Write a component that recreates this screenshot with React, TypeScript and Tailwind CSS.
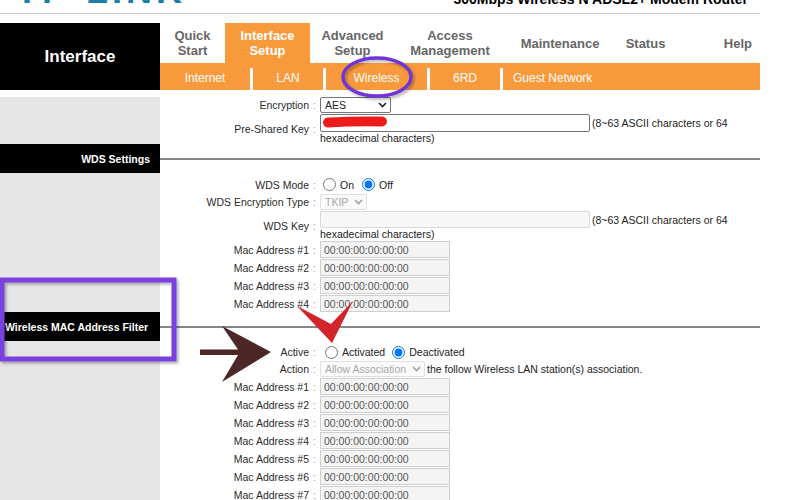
import React from 'react';

type Tab = { lines: string[]; w: string; active?: boolean; right?: boolean };

const tabs: Tab[] = [
    { lines: ['Quick', 'Start'], w: 'w-[65px]' },
    { lines: ['Interface', 'Setup'], w: 'w-[85px]', active: true },
    { lines: ['Advanced', 'Setup'], w: 'w-[85px]' },
    { lines: ['Access', 'Management'], w: 'w-[110px]' },
    { lines: ['Maintenance'], w: 'w-[110px]' },
    { lines: ['Status'], w: 'w-[61px]' },
    { lines: ['Help'], w: 'w-[84px]', right: true },
];

const subTabs = [
    { label: 'Internet', w: 'w-[90px]' },
    { label: 'LAN', w: 'w-[70px]' },
    { label: 'Wireless', w: 'w-[101px]' },
    { label: '6RD', w: 'w-[70px]' },
];

const Chevron = ({ className }: { className: string }) => (
    <svg width="9" height="6" viewBox="0 0 9 6" className={className}>
        <path d="M1 1l3.5 3.5L8 1" fill="none" stroke="currentColor" strokeWidth="1.6" />
    </svg>
);

const FakeSelect = ({ value, className, disabled }: { value: string; className: string; disabled?: boolean }) => (
    <div
        className={`flex items-center justify-between rounded-[2px] border pl-[4px] pr-[3px] ${
            disabled ? 'border-[#e0e0e0] bg-[#fafafa] text-[#a8a8a8]' : 'border-[#767676] bg-white text-[#222]'
        } ${className}`}
    >
        <span>{value}</span>
        <Chevron className={disabled ? 'text-[#a0a0a0]' : 'text-[#222]'} />
    </div>
);

const Field = ({ label, className = '', children }: { label: string; className?: string; children: React.ReactNode }) => (
    <div className={`flex items-center ${className}`}>
        <div className="w-[149px] text-right text-[#2a2a2a]">{label}</div>
        <div className="w-[11px] text-center text-[#9a9a9a]">:</div>
        {children}
    </div>
);

const MacRow = ({ n }: { n: number }) => (
    <Field label={`Mac Address #${n}`} className="h-[17px]">
        <input
            readOnly
            value="00:00:00:00:00:00"
            className="h-[17px] w-[130px] border border-[#cfcfcf] bg-[#f4f4f4] px-[3px] text-[#555] outline-none"
        />
    </Field>
);

const Radio = ({ name, label, checked }: { name: string; label: string; checked?: boolean }) => (
    <label className="flex items-center">
        <input type="radio" name={name} defaultChecked={checked} className="m-0 h-[13px] w-[13px]" />
        <span className="ml-[4px] text-[#222]">{label}</span>
    </label>
);

const SectionBar = ({ title, left }: { title: string; left?: boolean }) => (
    <div className="flex h-[29px] items-center">
        <div
            className={`flex h-full w-[160px] items-center bg-black text-[10.5px] font-bold text-white ${
                left ? 'justify-start pl-[5px]' : 'justify-end pr-[10px]'
            }`}
        >
            {title}
        </div>
        <div className="h-[2px] w-[600px] bg-[#858585]" />
    </div>
);

const KeyField = ({ label, disabled, tall }: { label: string; disabled?: boolean; tall?: boolean }) => (
    <Field label={label}>
        <div className="flex flex-col">
            <div className={`flex items-center ${tall ? 'h-[18px]' : 'h-[17px]'}`}>
                <input
                    readOnly
                    disabled={disabled}
                    className={`h-full w-[270px] rounded-[2px] border outline-none ${
                        disabled ? 'border-[#d9d9d9] bg-[#f7f7f7]' : 'border-[#767676] bg-white'
                    }`}
                />
                <span className="ml-[2px] text-[#222]">(8~63 ASCII characters or 64</span>
            </div>
            <div className="h-[12px] text-[#222]">hexadecimal characters)</div>
        </div>
    </Field>
);

export default function App() {
    return (
        <div className="relative h-[500px] w-[801px] overflow-hidden bg-white font-['Liberation_Sans',Arial,sans-serif]">
            {/* header, cut off at the top */}
            <div className="flex h-[13px] overflow-hidden">
                <div className="ml-[16px] -mt-[27px] text-[36px] font-bold leading-[36px] tracking-[4px] text-[#1d7fa6]">
                    TP-LINK
                </div>
                <div className="ml-auto mr-[53px] -mt-[8px] text-[14px] font-bold leading-[14px] text-black">
                    300Mbps Wireless N ADSL2+ Modem Router
                </div>
            </div>
            <div className="h-[1px] w-[760px] bg-[#c9c9c9]" />
            <div className="h-[9px]" />

            {/* navigation */}
            <div className="flex h-[67px]">
                <div className="flex w-[160px] items-center justify-center bg-black text-[17px] font-bold text-white">
                    Interface
                </div>
                <div className="flex w-[600px] flex-col">
                    <div className="flex h-[40px]">
                        {tabs.map((t) => (
                            <div
                                key={t.lines.join(' ')}
                                className={`flex flex-col justify-center text-[13px] font-bold leading-[15px] ${t.w} ${
                                    t.active ? 'bg-[#f89a3c] text-white' : 'text-[#666]'
                                } ${t.right ? 'items-end pr-[8px]' : 'items-center'}`}
                            >
                                {t.lines.map((l) => (
                                    <span key={l}>{l}</span>
                                ))}
                            </div>
                        ))}
                    </div>
                    <div className="flex h-[27px] bg-[#f89a3c] text-[12px] text-white">
                        {subTabs.map((s) => (
                            <React.Fragment key={s.label}>
                                <div className={`flex items-center justify-center pt-[3px] ${s.w}`}>{s.label}</div>
                                <div className="mt-[5px] w-[3px] bg-white" />
                            </React.Fragment>
                        ))}
                        <div className="flex items-center pl-[10px] pt-[3px]">Guest Network</div>
                    </div>
                </div>
            </div>

            <div className="text-[10.5px] leading-[12px]">
                {/* wireless security */}
                <div className="flex">
                    <div className="flex w-[160px] flex-col">
                        <div className="h-[7px] bg-white" />
                        <div className="flex-1 bg-[#e6e6e6]" />
                    </div>
                    <div className="flex flex-col pt-[7px]">
                        <Field label="Encryption" className="h-[16px]">
                            <FakeSelect value="AES" className="h-[16px] w-[71px]" />
                        </Field>
                        <div className="mt-[1px]">
                            <KeyField label="Pre-Shared Key" tall />
                        </div>
                    </div>
                </div>

                <SectionBar title="WDS Settings" />

                {/* WDS */}
                <div className="flex">
                    <div className="w-[160px] bg-[#e6e6e6]" />
                    <div className="flex flex-col gap-[1px] pt-[3px]">
                        <Field label="WDS Mode" className="h-[17px]">
                            <div className="ml-[3px] flex items-center gap-[8px]">
                                <Radio name="wds" label="On" />
                                <Radio name="wds" label="Off" checked />
                            </div>
                        </Field>
                        <Field label="WDS Encryption Type" className="h-[16px]">
                            <FakeSelect value="TKIP" className="h-[16px] w-[47px]" disabled />
                        </Field>
                        <KeyField label="WDS Key" disabled />
                        {[1, 2, 3, 4].map((n) => (
                            <MacRow key={n} n={n} />
                        ))}
                    </div>
                </div>

                <SectionBar title="Wireless MAC Address Filter" left />

                {/* MAC filter */}
                <div className="flex">
                    <div className="w-[160px] bg-[#e6e6e6]" />
                    <div className="flex flex-col gap-[1px] pt-[3px]">
                        <Field label="Active" className="h-[16px]">
                            <div className="ml-[5px] flex items-center gap-[7px]">
                                <Radio name="act" label="Activated" />
                                <Radio name="act" label="Deactivated" checked />
                            </div>
                        </Field>
                        <Field label="Action" className="h-[16px]">
                            <FakeSelect value="Allow Association" className="h-[16px] w-[105px]" disabled />
                            <span className="ml-[2px] text-[#222]">the follow Wireless LAN station(s) association.</span>
                        </Field>
                        {[1, 2, 3, 4, 5, 6, 7].map((n) => (
                            <MacRow key={n} n={n} />
                        ))}
                    </div>
                </div>
            </div>

            {/* annotations drawn over the screenshot */}
            <svg className="pointer-events-none absolute left-0 top-0" width="801" height="500" viewBox="0 0 801 500">
                <defs>
                    <filter id="sh" x="-10%" y="-10%" width="130%" height="130%">
                        <feDropShadow dx="2" dy="2" stdDeviation="1.5" floodColor="#000" floodOpacity="0.3" />
                    </filter>
                </defs>
                <ellipse cx="377" cy="77" rx="34" ry="19" fill="none" stroke="#7136d6" strokeWidth="3.5" filter="url(#sh)" />
                <rect x="2" y="280" width="172" height="79" fill="none" stroke="#7a3fe0" strokeWidth="5" filter="url(#sh)" />
                <path d="M328 122.5 Q352 121 382 121.5" fill="none" stroke="#ee1b1b" strokeWidth="10" strokeLinecap="round" />
                <path d="M200 349.5 L238 349.5 L222 326 L271 352 L222 382 L238 355 L200 355 Z" fill="#4b2727" />
                <path d="M297 306 L331 324 L353 301 L332 343 Z" fill="#d1242b" />
            </svg>
        </div>
    );
}
